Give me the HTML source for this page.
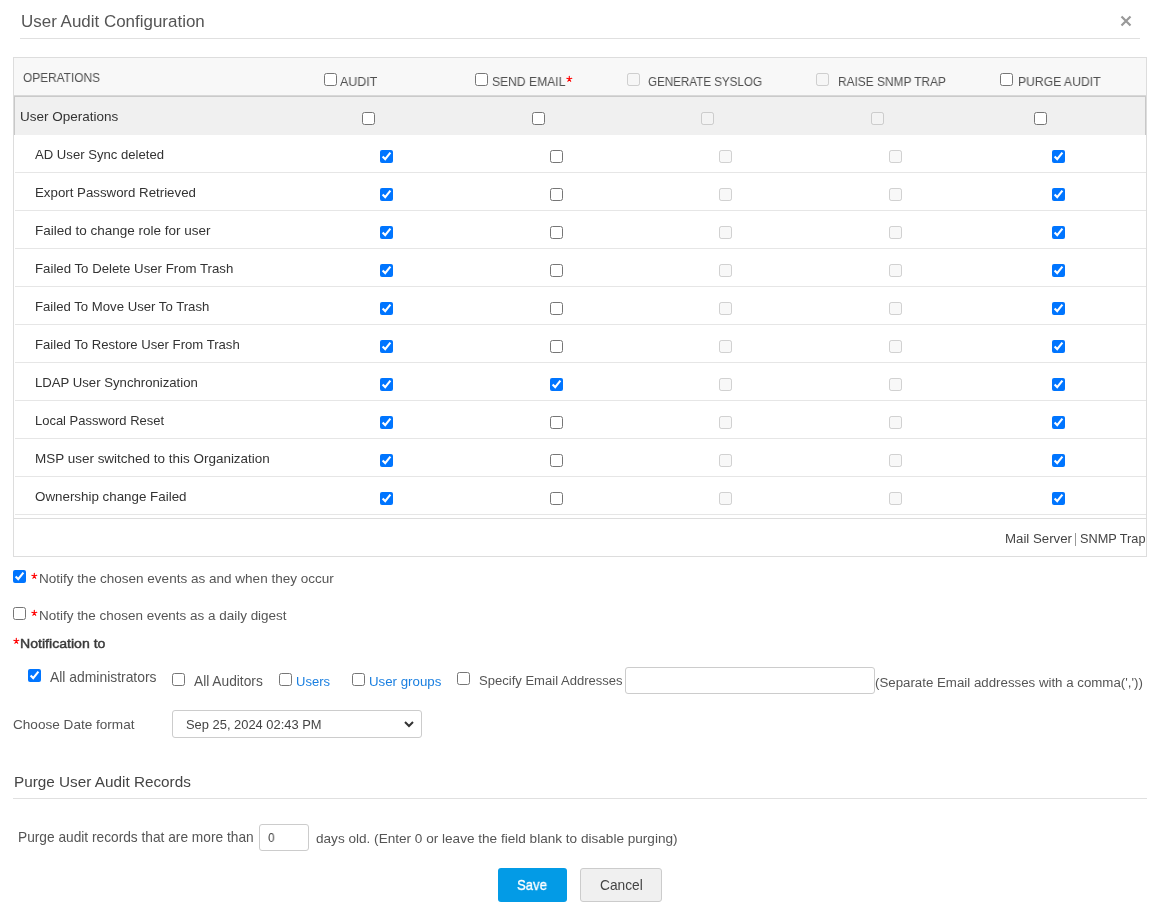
<!DOCTYPE html>
<html><head><meta charset="utf-8"><style>
html,body{margin:0;padding:0;background:#fff;}
body{width:1164px;height:910px;overflow:hidden;position:relative;font-family:"Liberation Sans",sans-serif;}
.t{position:absolute;white-space:pre;line-height:20px;will-change:transform;font-family:"Liberation Sans",sans-serif;}
.cb{position:absolute;margin:0;width:13px;height:13px;}
.box{position:absolute;box-sizing:border-box;}
.sep{position:absolute;left:15px;width:1131px;height:1px;background:#e6e6e6;}
.red{color:#e00;}
</style></head><body>
<div class="box" style="left:20px;top:38px;width:1120px;height:1px;background:#e0e0e0"></div>
<svg class="box" style="left:1119px;top:14px" width="14" height="14" viewBox="0 0 14 14"><path d="M2.5 2.5L11.5 11.5M11.5 2.5L2.5 11.5" stroke="#999" stroke-width="2.2" fill="none"/></svg>
<div class="box" style="left:13px;top:57px;width:1134px;height:500px;border:1px solid #ddd"></div>
<div class="box" style="left:14px;top:58px;width:1132px;height:38px;background:#f8f8f8;border-bottom:1px solid #d8d8d8"></div>
<div class="box" style="left:14px;top:96px;width:1132px;height:39px;background:#f0f0f0;border-top:1px solid #cacaca;border-left:1px solid #c8c8c8;border-right:1px solid #c8c8c8"></div>
<div class='sep' style='top:172px'></div>
<div class='sep' style='top:210px'></div>
<div class='sep' style='top:248px'></div>
<div class='sep' style='top:286px'></div>
<div class='sep' style='top:324px'></div>
<div class='sep' style='top:362px'></div>
<div class='sep' style='top:400px'></div>
<div class='sep' style='top:438px'></div>
<div class='sep' style='top:476px'></div>
<div class='sep' style='top:514px'></div>
<div class="box" style="left:13px;top:518px;width:1134px;height:1px;background:#ddd"></div>
<div class="box" style="left:1075px;top:533px;width:1px;height:13px;background:#999"></div>
<svg class="box" style="left:566px;top:75px" width="8" height="8" viewBox="0 0 8 8"><path d="M3.3 1.3V4.1M0.8 3.3L3.3 4.1L5.8 3.3M1.9 6.3L3.3 4.1L4.7 6.3" stroke="#f00" stroke-width="1.1" fill="none" stroke-linecap="round" stroke-linejoin="round"/></svg>
<svg class="box" style="left:31px;top:572px" width="8" height="8" viewBox="0 0 8 8"><path d="M3.3 1.3V4.1M0.8 3.3L3.3 4.1L5.8 3.3M1.9 6.3L3.3 4.1L4.7 6.3" stroke="#f00" stroke-width="1.1" fill="none" stroke-linecap="round" stroke-linejoin="round"/></svg>
<svg class="box" style="left:31px;top:609px" width="8" height="8" viewBox="0 0 8 8"><path d="M3.3 1.3V4.1M0.8 3.3L3.3 4.1L5.8 3.3M1.9 6.3L3.3 4.1L4.7 6.3" stroke="#f00" stroke-width="1.1" fill="none" stroke-linecap="round" stroke-linejoin="round"/></svg>
<svg class="box" style="left:13px;top:637px" width="8" height="8" viewBox="0 0 8 8"><path d="M3.3 1.3V4.1M0.8 3.3L3.3 4.1L5.8 3.3M1.9 6.3L3.3 4.1L4.7 6.3" stroke="#f00" stroke-width="1.1" fill="none" stroke-linecap="round" stroke-linejoin="round"/></svg>
<div class="box" style="left:625px;top:667px;width:250px;height:27px;border:1px solid #ccc;border-radius:3px"></div>
<div class="box" style="left:172px;top:710px;width:250px;height:28px;border:1px solid #ccc;border-radius:3px"></div>
<svg class="box" style="left:402px;top:719px" width="14" height="10" viewBox="0 0 14 10"><path d="M3 3L7 7L11 3" stroke="#333" stroke-width="2" fill="none"/></svg>
<div class="box" style="left:13px;top:798px;width:1134px;height:1px;background:#e0e0e0"></div>
<div class="box" style="left:259px;top:824px;width:50px;height:27px;border:1px solid #ccc;border-radius:3px"></div>
<div class="box" style="left:498px;top:868px;width:69px;height:34px;background:#039be6;border-radius:3px"></div>
<div class="box" style="left:580px;top:868px;width:82px;height:34px;background:#f0f0f0;border:1px solid #ccc;border-radius:3px"></div>
<input type='checkbox' class='cb' style='left:324px;top:73px'>
<input type='checkbox' class='cb' style='left:475px;top:73px'>
<input type='checkbox' class='cb' style='left:627px;top:73px' disabled>
<input type='checkbox' class='cb' style='left:816px;top:73px' disabled>
<input type='checkbox' class='cb' style='left:1000px;top:73px'>
<input type='checkbox' class='cb' style='left:362px;top:112px'>
<input type='checkbox' class='cb' style='left:532px;top:112px'>
<input type='checkbox' class='cb' style='left:701px;top:112px' disabled>
<input type='checkbox' class='cb' style='left:871px;top:112px' disabled>
<input type='checkbox' class='cb' style='left:1034px;top:112px'>
<input type='checkbox' class='cb' style='left:380px;top:150px' checked>
<input type='checkbox' class='cb' style='left:550px;top:150px'>
<input type='checkbox' class='cb' style='left:719px;top:150px' disabled>
<input type='checkbox' class='cb' style='left:889px;top:150px' disabled>
<input type='checkbox' class='cb' style='left:1052px;top:150px' checked>
<input type='checkbox' class='cb' style='left:380px;top:188px' checked>
<input type='checkbox' class='cb' style='left:550px;top:188px'>
<input type='checkbox' class='cb' style='left:719px;top:188px' disabled>
<input type='checkbox' class='cb' style='left:889px;top:188px' disabled>
<input type='checkbox' class='cb' style='left:1052px;top:188px' checked>
<input type='checkbox' class='cb' style='left:380px;top:226px' checked>
<input type='checkbox' class='cb' style='left:550px;top:226px'>
<input type='checkbox' class='cb' style='left:719px;top:226px' disabled>
<input type='checkbox' class='cb' style='left:889px;top:226px' disabled>
<input type='checkbox' class='cb' style='left:1052px;top:226px' checked>
<input type='checkbox' class='cb' style='left:380px;top:264px' checked>
<input type='checkbox' class='cb' style='left:550px;top:264px'>
<input type='checkbox' class='cb' style='left:719px;top:264px' disabled>
<input type='checkbox' class='cb' style='left:889px;top:264px' disabled>
<input type='checkbox' class='cb' style='left:1052px;top:264px' checked>
<input type='checkbox' class='cb' style='left:380px;top:302px' checked>
<input type='checkbox' class='cb' style='left:550px;top:302px'>
<input type='checkbox' class='cb' style='left:719px;top:302px' disabled>
<input type='checkbox' class='cb' style='left:889px;top:302px' disabled>
<input type='checkbox' class='cb' style='left:1052px;top:302px' checked>
<input type='checkbox' class='cb' style='left:380px;top:340px' checked>
<input type='checkbox' class='cb' style='left:550px;top:340px'>
<input type='checkbox' class='cb' style='left:719px;top:340px' disabled>
<input type='checkbox' class='cb' style='left:889px;top:340px' disabled>
<input type='checkbox' class='cb' style='left:1052px;top:340px' checked>
<input type='checkbox' class='cb' style='left:380px;top:378px' checked>
<input type='checkbox' class='cb' style='left:550px;top:378px' checked>
<input type='checkbox' class='cb' style='left:719px;top:378px' disabled>
<input type='checkbox' class='cb' style='left:889px;top:378px' disabled>
<input type='checkbox' class='cb' style='left:1052px;top:378px' checked>
<input type='checkbox' class='cb' style='left:380px;top:416px' checked>
<input type='checkbox' class='cb' style='left:550px;top:416px'>
<input type='checkbox' class='cb' style='left:719px;top:416px' disabled>
<input type='checkbox' class='cb' style='left:889px;top:416px' disabled>
<input type='checkbox' class='cb' style='left:1052px;top:416px' checked>
<input type='checkbox' class='cb' style='left:380px;top:454px' checked>
<input type='checkbox' class='cb' style='left:550px;top:454px'>
<input type='checkbox' class='cb' style='left:719px;top:454px' disabled>
<input type='checkbox' class='cb' style='left:889px;top:454px' disabled>
<input type='checkbox' class='cb' style='left:1052px;top:454px' checked>
<input type='checkbox' class='cb' style='left:380px;top:492px' checked>
<input type='checkbox' class='cb' style='left:550px;top:492px'>
<input type='checkbox' class='cb' style='left:719px;top:492px' disabled>
<input type='checkbox' class='cb' style='left:889px;top:492px' disabled>
<input type='checkbox' class='cb' style='left:1052px;top:492px' checked>
<input type='checkbox' class='cb' style='left:13px;top:570px' checked>
<input type='checkbox' class='cb' style='left:13px;top:607px'>
<input type='checkbox' class='cb' style='left:28px;top:669px' checked>
<input type='checkbox' class='cb' style='left:172px;top:673px'>
<input type='checkbox' class='cb' style='left:279px;top:673px'>
<input type='checkbox' class='cb' style='left:352px;top:673px'>
<input type='checkbox' class='cb' style='left:457px;top:672px'>
<div class='t' style='left:20.5px;top:12.42px;font-size:16.97px;color:#555;font-weight:normal;'>User Audit Configuration</div>
<div class='t' style='left:22.7px;top:67.56px;font-size:12.8px;transform:scaleX(0.9279);transform-origin:0 0;color:#505050;font-weight:normal;'>OPERATIONS</div>
<div class='t' style='left:340.2px;top:71.56px;font-size:12.8px;transform:scaleX(0.974);transform-origin:0 0;color:#505050;font-weight:normal;'>AUDIT</div>
<div class='t' style='left:491.6px;top:71.56px;font-size:12.8px;transform:scaleX(0.9466);transform-origin:0 0;color:#505050;font-weight:normal;'>SEND EMAIL</div>
<div class='t' style='left:648.3px;top:71.56px;font-size:12.8px;transform:scaleX(0.9071);transform-origin:0 0;color:#505050;font-weight:normal;'>GENERATE SYSLOG</div>
<div class='t' style='left:838.3px;top:71.56px;font-size:12.8px;transform:scaleX(0.9296);transform-origin:0 0;color:#505050;font-weight:normal;'>RAISE SNMP TRAP</div>
<div class='t' style='left:1017.5px;top:71.56px;font-size:12.8px;transform:scaleX(0.9508);transform-origin:0 0;color:#505050;font-weight:normal;'>PURGE AUDIT</div>
<div class='t' style='left:19.6px;top:107.22px;font-size:13.51px;color:#333;font-weight:normal;'>User Operations</div>
<div class='t' style='left:35.0px;top:145.36px;font-size:13.11px;color:#333;font-weight:normal;'>AD User Sync deleted</div>
<div class='t' style='left:35.0px;top:183.30px;font-size:13.29px;color:#333;font-weight:normal;'>Export Password Retrieved</div>
<div class='t' style='left:35.0px;top:221.22px;font-size:13.51px;color:#333;font-weight:normal;'>Failed to change role for user</div>
<div class='t' style='left:35.0px;top:259.31px;font-size:13.24px;color:#333;font-weight:normal;'>Failed To Delete User From Trash</div>
<div class='t' style='left:35.0px;top:297.34px;font-size:13.16px;color:#333;font-weight:normal;'>Failed To Move User To Trash</div>
<div class='t' style='left:35.0px;top:335.35px;font-size:13.14px;color:#333;font-weight:normal;'>Failed To Restore User From Trash</div>
<div class='t' style='left:35.0px;top:373.34px;font-size:13.17px;color:#333;font-weight:normal;'>LDAP User Synchronization</div>
<div class='t' style='left:35.0px;top:411.41px;font-size:12.97px;color:#333;font-weight:normal;'>Local Password Reset</div>
<div class='t' style='left:35.0px;top:449.23px;font-size:13.48px;color:#333;font-weight:normal;'>MSP user switched to this Organization</div>
<div class='t' style='left:35.0px;top:487.27px;font-size:13.36px;color:#333;font-weight:normal;'>Ownership change Failed</div>
<div class='t' style='left:1005.0px;top:528.71px;font-size:13.25px;color:#444;font-weight:normal;'>Mail Server</div>
<div class='t' style='left:1080.0px;top:528.89px;font-size:12.72px;color:#444;font-weight:normal;'>SNMP Trap</div>
<div class='t' style='left:39.0px;top:568.51px;font-size:13.54px;color:#555;font-weight:normal;'>Notify the chosen events as and when they occur</div>
<div class='t' style='left:39.0px;top:606.34px;font-size:13.46px;color:#555;font-weight:normal;'>Notify the chosen events as a daily digest</div>
<div class='t' style='left:20.4px;top:634.39px;font-size:13.6px;transform:scaleX(1.0376);transform-origin:0 0;color:#3a3a3a;font-weight:normal;-webkit-text-stroke:0.45px #3a3a3a;'>Notification to</div>
<div class='t' style='left:49.7px;top:667.48px;font-size:13.9px;color:#555;font-weight:normal;'>All administrators</div>
<div class='t' style='left:194.2px;top:672.34px;font-size:13.75px;color:#555;font-weight:normal;'>All Auditors</div>
<div class='t' style='left:296.0px;top:671.59px;font-size:13.02px;color:#1a7fe0;font-weight:normal;'>Users</div>
<div class='t' style='left:369.2px;top:671.50px;font-size:13.29px;color:#1a7fe0;font-weight:normal;'>User groups</div>
<div class='t' style='left:479.1px;top:670.68px;font-size:13.05px;color:#555;font-weight:normal;'>Specify Email Addresses</div>
<div class='t' style='left:874.8px;top:673.20px;font-size:13.29px;color:#555;font-weight:normal;'>(Separate Email addresses with a comma(','))</div>
<div class='t' style='left:13.4px;top:715.19px;font-size:13.58px;color:#555;font-weight:normal;'>Choose Date format</div>
<div class='t' style='left:185.6px;top:715.42px;font-size:12.92px;color:#444;font-weight:normal;'>Sep 25, 2024 02:43 PM</div>
<div class='t' style='left:13.6px;top:771.80px;font-size:15.31px;color:#444;font-weight:normal;'>Purge User Audit Records</div>
<div class='t' style='left:17.7px;top:827.84px;font-size:13.73px;color:#555;font-weight:normal;'>Purge audit records that are more than</div>
<div class='t' style='left:268.4px;top:827.89px;font-size:13.3px;transform:scaleX(0.8917);transform-origin:0 0;color:#444;font-weight:normal;'>0</div>
<div class='t' style='left:316.0px;top:828.89px;font-size:13.58px;color:#555;font-weight:normal;'>days old. (Enter 0 or leave the field blank to disable purging)</div>
<div class='t' style='left:517.4px;top:875.07px;font-size:14.8px;transform:scaleX(0.889);transform-origin:0 0;color:#fff;font-weight:normal;-webkit-text-stroke:0.35px #fff;'>Save</div>
<div class='t' style='left:599.5px;top:876.45px;font-size:13.72px;color:#444;font-weight:normal;'>Cancel</div>
</body></html>
